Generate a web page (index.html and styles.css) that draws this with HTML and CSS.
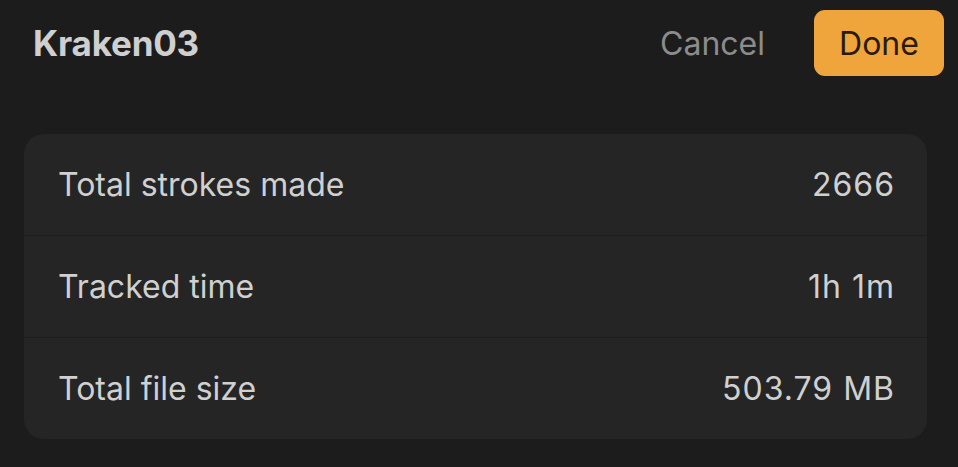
FILE: index.html
```html
<!DOCTYPE html>
<html>
<head>
<meta charset="utf-8">
<link rel="stylesheet" href="styles.css">
</head>
<body>
<div class="page">
  <header class="header">
    <h1 class="title">Kraken03</h1>
    <div class="actions">
      <button class="cancel">Cancel</button>
      <button class="done">Done</button>
    </div>
  </header>
  <section class="card">
    <div class="row"><span class="label">Total strokes made</span><span class="value">2666</span></div>
    <div class="row"><span class="label">Tracked time</span><span class="value">1h 1m</span></div>
    <div class="row"><span class="label">Total file size</span><span class="value">503.79 MB</span></div>
  </section>
</div>
</body>
</html>
```
FILE: styles.css
```css
html, body {
  margin: 0;
  padding: 0;
  background: #1c1c1c;
  width: 958px;
  height: 467px;
  overflow: hidden;
  font-family: Inter, "Noto Sans", sans-serif;
}
.page {
  display: flex;
  flex-direction: column;
}
.header {
  height: 86px;
  display: flex;
  align-items: center;
  justify-content: space-between;
  padding: 0 14px 0 33px;
}
.title {
  margin: 0;
  font-size: 35px;
  font-weight: 700;
  color: #cfcfcf;
  letter-spacing: -0.2px;
}
.actions {
  display: flex;
  align-items: center;
  gap: 49px;
}
.cancel {
  background: none;
  border: none;
  padding: 0;
  font-family: inherit;
  font-size: 32px;
  color: #8c8c8c;
}
.done {
  width: 130px;
  height: 66px;
  border: none;
  border-radius: 11px;
  background: #f0a43c;
  color: #2a1a08;
  font-family: inherit;
  font-size: 32px;
  padding: 0;
}
.card {
  margin: 48px 31px 0 24px;
  background: #252525;
  border-radius: 20px;
  display: flex;
  flex-direction: column;
}
.row {
  height: 101px;
  display: flex;
  align-items: center;
  justify-content: space-between;
  padding: 0 32px 0 34px;
  border-top: 1px solid #1e1e1e;
  font-size: 32px;
  color: #d0d0d0;
}
.row:first-child {
  border-top: none;
}
.value {
  letter-spacing: 1px;
}
```
